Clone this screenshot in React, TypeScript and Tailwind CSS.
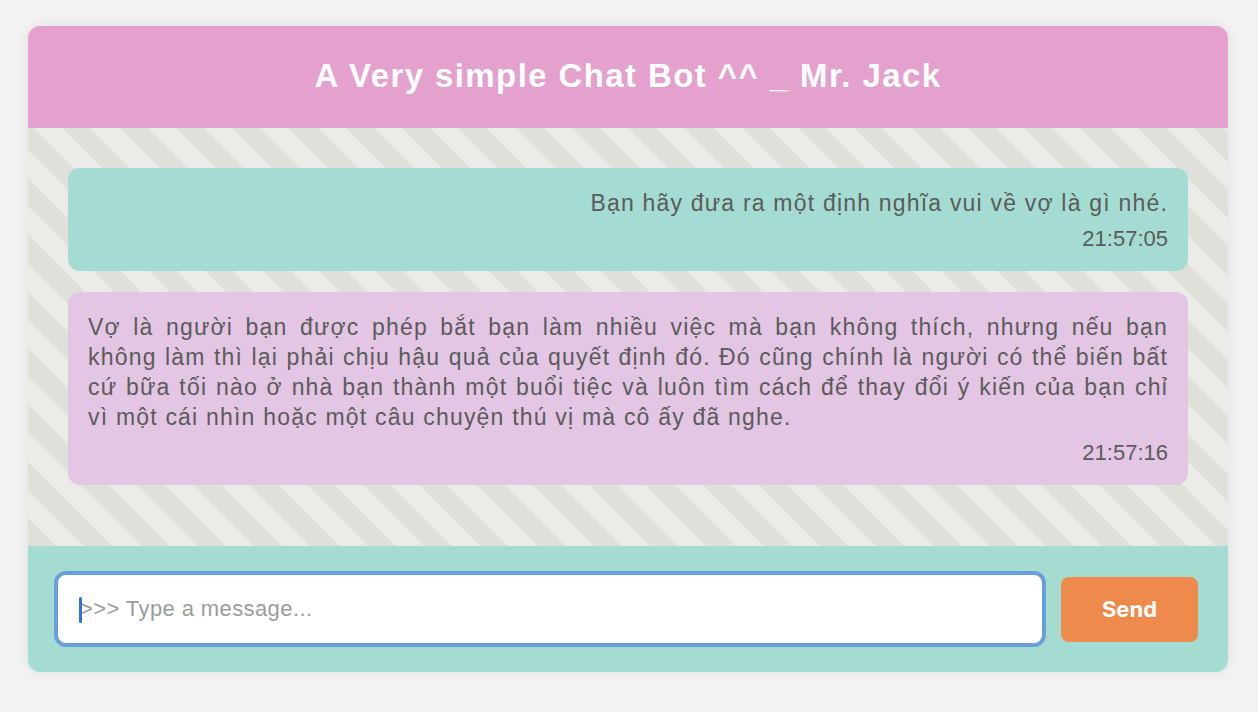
import React from 'react';

type Message = { from: 'user' | 'bot'; lines: string[]; time: string };

const MESSAGES: Message[] = [
  {
    from: 'user',
    lines: ['Bạn hãy đưa ra một định nghĩa vui về vợ là gì nhé.'],
    time: '21:57:05',
  },
  {
    from: 'bot',
    lines: [
      'Vợ là người bạn được phép bắt bạn làm nhiều việc mà bạn không thích, nhưng nếu bạn',
      'không làm thì lại phải chịu hậu quả của quyết định đó. Đó cũng chính là người có thể biến bất',
      'cứ bữa tối nào ở nhà bạn thành một buổi tiệc và luôn tìm cách để thay đổi ý kiến của bạn chỉ',
      'vì một cái nhìn hoặc một câu chuyện thú vị mà cô ấy đã nghe.',
    ],
    time: '21:57:16',
  },
];

const Bubble: React.FC<{ msg: Message }> = ({ msg }) => {
  const isUser = msg.from === 'user';
  return (
    <div className={isUser ? 'rounded-[12px] bg-[#a4dbd2] p-5' : 'rounded-[12px] bg-[#e3c5e4] p-5'}>
      <div className="text-[23px] leading-[30px] tracking-[1.2px] text-[#5b5b5b]">
        {msg.lines.map((line, i) => {
          // bot answers are justified, last line stays left
          const last = i === msg.lines.length - 1;
          let cls = 'whitespace-nowrap text-left';
          if (isUser) cls = 'whitespace-nowrap text-right';
          else if (!last) cls = 'whitespace-nowrap text-justify [text-align-last:justify]';
          return (
            <div key={i} className={cls}>
              {line}
            </div>
          );
        })}
      </div>
      <div className="mt-2 text-right text-[22px] leading-[25px] text-[#5b5b5b]">{msg.time}</div>
    </div>
  );
};

export default function App() {
  return (
    <div className="min-h-[712px] bg-[#f2f2f2] pt-[26px] font-['Liberation_Sans',Arial,sans-serif]">
      <div className="ml-[28px] w-[1200px] overflow-hidden rounded-[12px] bg-white shadow-[0_0_12px_rgba(0,0,0,0.08)]">
        {/* header */}
        <div className="flex h-[102px] items-center justify-center bg-[#e5a1ce] pb-[2px]">
          <h1 className="text-[33px] font-bold tracking-[1.4px] text-white">A Very simple Chat Bot ^^ _ Mr. Jack</h1>
        </div>

        {/* messages */}
        <div className="flex h-[418px] flex-col gap-[21px] overflow-hidden bg-[repeating-linear-gradient(45deg,#dee0d9_0px,#dee0d9_20px,#ebece7_20px,#ebece7_40px)] px-10 pt-10">
          {MESSAGES.map((m, i) => (
            <Bubble key={i} msg={m} />
          ))}
        </div>

        {/* input bar */}
        <div className="flex h-[126px] items-center bg-[#a5dcd1] pl-[26px] pr-[30px]">
          <div className="relative flex h-[76px] flex-1 items-center rounded-[12px] border-4 border-[#6a9edb] bg-white">
            <span className="absolute left-[21px] top-[22px] h-[26px] w-[3px] rounded-full bg-[#2f6fe0]" />
            <input
              className="h-full w-full rounded-[8px] bg-transparent pl-[22px] text-[22px] tracking-[0.4px] text-[#333] outline-none placeholder:text-[#9c9c9c]"
              placeholder=">>> Type a message..."
            />
          </div>
          <button className="ml-[15px] h-[65px] w-[137px] rounded-[8px] bg-[#ef8a4d] font-['Inter',sans-serif] text-[22px] font-bold text-white">
            Send
          </button>
        </div>
      </div>
    </div>
  );
}
